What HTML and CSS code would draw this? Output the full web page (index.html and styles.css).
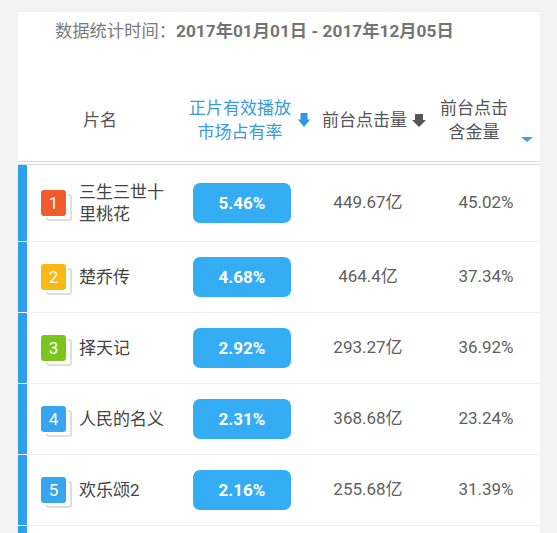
FILE: index.html
```html
<!DOCTYPE html>
<html lang="zh-CN">
<head>
<meta charset="utf-8">
<title>数据统计</title>
<link rel="stylesheet" href="styles.css">
</head>
<body>
<div class="card">
  <div class="title">数据统计时间：<span class="date">2017年01月01日 - 2017年12月05日</span></div>
  <div class="head">
    <div class="h-name">片名</div>
    <div class="h-rate">正片有效播放<br>市场占有率</div>
    <svg class="arrow arrow-blue" viewBox="0 0 12 14" width="12" height="14"><path d="M2.5 0H9.5V6.5H12L6 14L0 6.5H2.5Z" fill="#2f97e4"/></svg>
    <div class="h-click">前台点击量</div>
    <svg class="arrow arrow-gray" viewBox="0 0 14 13" width="14" height="13"><path d="M3 0H11V6H14L7 13L0 6H3Z" fill="#555"/></svg>
    <div class="h-gold">前台点击<br>含金量</div>
    <svg class="caret" viewBox="0 0 12 5" width="12" height="5"><path d="M0 0H12L6 5Z" fill="#3aa3e6"/></svg>
  </div>
  <div class="rule"></div>

  <div class="row row-tall">
    <div class="bar"></div>
    <div class="cells">
      <div class="c-name"><span class="badge r1">1</span><span class="name">三生三世十<br>里桃花</span></div>
      <div class="c-rate"><span class="pill">5.46%</span></div>
      <div class="c-val">449.67亿</div>
      <div class="c-gold">45.02%</div>
    </div>
  </div>
  <div class="row">
    <div class="bar"></div>
    <div class="cells">
      <div class="c-name"><span class="badge r2">2</span><span class="name">楚乔传</span></div>
      <div class="c-rate"><span class="pill">4.68%</span></div>
      <div class="c-val">464.4亿</div>
      <div class="c-gold">37.34%</div>
    </div>
  </div>
  <div class="row">
    <div class="bar"></div>
    <div class="cells">
      <div class="c-name"><span class="badge r3">3</span><span class="name">择天记</span></div>
      <div class="c-rate"><span class="pill">2.92%</span></div>
      <div class="c-val">293.27亿</div>
      <div class="c-gold">36.92%</div>
    </div>
  </div>
  <div class="row">
    <div class="bar"></div>
    <div class="cells">
      <div class="c-name"><span class="badge r4">4</span><span class="name">人民的名义</span></div>
      <div class="c-rate"><span class="pill">2.31%</span></div>
      <div class="c-val">368.68亿</div>
      <div class="c-gold">23.24%</div>
    </div>
  </div>
  <div class="row">
    <div class="bar"></div>
    <div class="cells">
      <div class="c-name"><span class="badge r5">5</span><span class="name">欢乐颂2</span></div>
      <div class="c-rate"><span class="pill">2.16%</span></div>
      <div class="c-val">255.68亿</div>
      <div class="c-gold">31.39%</div>
    </div>
  </div>
  <div class="row row-cut">
    <div class="bar"></div>
    <div class="cells"></div>
  </div>
</div>
</body>
</html>
```
FILE: styles.css
```css
html, body {
  margin: 0;
  padding: 0;
}
body {
  background: #f3f3f3;
  height: 533px;
  overflow: hidden;
  font-family: Roboto, "Noto Sans CJK SC", sans-serif;
  font-size: 17px;
}
.card {
  margin: 12px 17px 0 18px;
  background: #fff;
  height: 521px;
  overflow: hidden;
}
.title {
  padding-top: 7px;
  padding-left: 37px;
  height: 24px;
  line-height: 24px;
  color: #7a7a7a;
  font-size: 17.3px;
  white-space: nowrap;
}
.date {
  font-weight: 700;
  color: #747474;
}
.head {
  display: flex;
  align-items: center;
  height: 72px;
  margin-top: 41px;
  line-height: 24px;
  color: #555;
}
.h-name {
  width: 164px;
  text-align: center;
}
.h-rate {
  margin-left: 6px;
  width: 104px;
  text-align: center;
  color: #3a9bd9;
}
.arrow {
  display: block;
  flex: none;
}
.arrow-blue {
  margin-left: 6px;
}
.h-click {
  margin-left: 12px;
  white-space: nowrap;
}
.arrow-gray {
  margin-left: 5px;
}
.h-gold {
  margin-left: 14px;
  width: 68px;
  text-align: center;
}
.caret {
  display: block;
  align-self: flex-end;
  margin-left: 13px;
  margin-bottom: 14px;
}
.rule {
  margin-top: 5px;
  height: 2px;
  border-top: 1px solid #d9d9d9;
  border-bottom: 1px solid #d9d9d9;
}
.row {
  display: flex;
}
.bar {
  width: 9px;
  flex: none;
  background: #2ea1ee;
  margin-bottom: 1px;
}
.cells {
  flex: 1;
  display: grid;
  grid-template-columns: 158px 114px 138px 1fr;
  align-items: center;
  height: 70px;
  border-bottom: 1px solid #eeeeee;
  line-height: 20px;
}
.row-tall .cells {
  height: 76px;
}
.row-cut .cells {
  height: 7px;
  border-bottom: 0;
}
.row-cut .bar {
  margin-bottom: 0;
}
.c-name {
  position: relative;
  z-index: 0;
  display: flex;
  align-items: center;
  padding-left: 14px;
}
.badge {
  position: relative;
  flex: none;
  width: 25px;
  height: 26px;
  line-height: 26px;
  border-radius: 3px;
  color: #fff;
  text-align: center;
  font-size: 17px;
  box-shadow: 0 0 0 2px #fff;
}
.badge::after {
  content: "";
  position: absolute;
  left: 5px;
  top: 4px;
  width: 26px;
  height: 27px;
  box-sizing: border-box;
  border: 2px solid #dedede;
  border-radius: 3px;
  z-index: -1;
}
.r1 { background: #f2592c; }
.r2 { background: #fbb814; }
.r3 { background: #7cc51f; }
.r4 { background: #37a5f0; }
.r5 { background: #37a5f0; }
.name {
  margin-left: 13px;
  line-height: 22px;
  color: #444;
}
.c-rate {
  display: flex;
  justify-content: center;
}
.pill {
  width: 98px;
  height: 40px;
  line-height: 40px;
  border-radius: 7px;
  background: #35adf5;
  color: #fff;
  font-weight: 700;
  text-align: center;
}
.c-val {
  text-align: center;
  color: #606060;
  margin-top: -2px;
}
.c-gold {
  text-align: center;
  padding-right: 5px;
  color: #606060;
  margin-top: -2px;
}
```
